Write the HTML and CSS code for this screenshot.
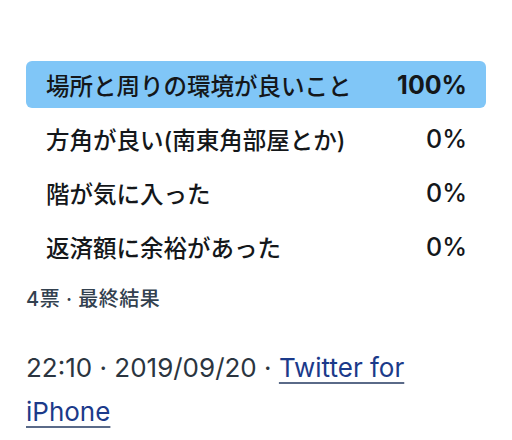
FILE: index.html
```html
<!DOCTYPE html>
<html lang="ja">
<head>
    <meta charset="UTF-8">
    <title>投票結果</title>
    <link rel="stylesheet" href="styles.css">
</head>
<body>
    <div class="poll">
        <div class="choice winner">
            <span class="label">場所と周りの環境が良いこと</span>
            <span class="percent">100%</span>
        </div>
        <div class="choice">
            <span class="label">方角が良い(南東角部屋とか)</span>
            <span class="percent">0%</span>
        </div>
        <div class="choice">
            <span class="label">階が気に入った</span>
            <span class="percent">0%</span>
        </div>
        <div class="choice">
            <span class="label">返済額に余裕があった</span>
            <span class="percent">0%</span>
        </div>
        <div class="poll-meta">4票 · 最終結果</div>
    </div>

    <div class="tweet-info">
        22:10 · 2019/09/20 · <a href="#">Twitter for iPhone</a>
    </div>
</body>
</html>
```

FILE: styles.css
```css
body {
    margin: 0;
    padding: 61px 26px 0 26px;
    font-family: Inter, "Noto Sans CJK JP", sans-serif;
    color: #14171a;
    background: #fff;
}
.poll {
    width: 460px;
}
.choice {
    display: flex;
    justify-content: space-between;
    align-items: center;
    height: 47px;
    padding: 0 19px 0 20px;
    margin-bottom: 7px;
    border-radius: 6px;
    font-size: 23.5px;
    font-weight: 500;
}
.winner {
    background-color: #80c6f7;
}
.percent {
    font-size: 25px;
    font-weight: 500;
}
.winner .percent {
    font-weight: 700;
}
.poll-meta {
    margin-top: 13px;
    font-size: 20px;
    font-weight: 500;
    letter-spacing: 0.5px;
    color: #33414f;
}
.tweet-info {
    width: 420px;
    margin-top: 34px;
    font-size: 26px;
    line-height: 44px;
    color: #2b3540;
}
.tweet-info a {
    color: #1b3a8a;
    text-decoration: underline;
    text-decoration-color: #5a6a88;
    text-underline-offset: 5px;
}
```
